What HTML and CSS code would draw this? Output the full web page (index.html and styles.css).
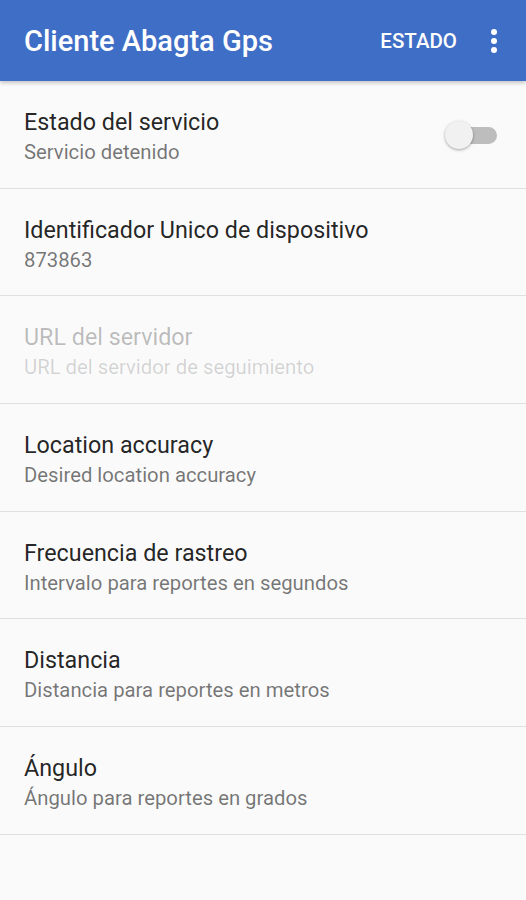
FILE: index.html
```html
<!DOCTYPE html>
<html lang="es">

<head>
    <meta charset="UTF-8">
    <meta name="viewport" content="width=device-width, initial-scale=1.0">
    <title>Cliente Abagta Gps</title>
    <link rel="stylesheet" href="styles.css">
</head>

<body>
    <!-- Toolbar -->
    <header class="toolbar">
        <h1 class="toolbar-title">Cliente Abagta Gps</h1>
        <span class="toolbar-action">ESTADO</span>
        <span class="overflow">
            <span class="dot"></span>
            <span class="dot"></span>
            <span class="dot"></span>
        </span>
    </header>

    <!-- Preferences -->
    <ul class="prefs">
        <li class="pref">
            <div class="pref-text">
                <div class="pref-title">Estado del servicio</div>
                <div class="pref-summary">Servicio detenido</div>
            </div>
            <span class="switch"><span class="thumb"></span></span>
        </li>
        <li class="pref">
            <div class="pref-text">
                <div class="pref-title">Identificador Unico de dispositivo</div>
                <div class="pref-summary">873863</div>
            </div>
        </li>
        <li class="pref disabled">
            <div class="pref-text">
                <div class="pref-title">URL del servidor</div>
                <div class="pref-summary">URL del servidor de seguimiento</div>
            </div>
        </li>
        <li class="pref">
            <div class="pref-text">
                <div class="pref-title">Location accuracy</div>
                <div class="pref-summary">Desired location accuracy</div>
            </div>
        </li>
        <li class="pref">
            <div class="pref-text">
                <div class="pref-title">Frecuencia de rastreo</div>
                <div class="pref-summary">Intervalo para reportes en segundos</div>
            </div>
        </li>
        <li class="pref">
            <div class="pref-text">
                <div class="pref-title">Distancia</div>
                <div class="pref-summary">Distancia para reportes en metros</div>
            </div>
        </li>
        <li class="pref">
            <div class="pref-text">
                <div class="pref-title">Ángulo</div>
                <div class="pref-summary">Ángulo para reportes en grados</div>
            </div>
        </li>
    </ul>
</body>

</html>
```

FILE: styles.css
```css
body {
    font-family: Roboto, "Liberation Sans", sans-serif;
    background-color: #fafafa;
    margin: 0;
}

.toolbar {
    position: relative;
    z-index: 1;
    display: flex;
    align-items: center;
    height: 81px;
    padding: 0 29px 0 24px;
    background-color: #3f6ec6;
    color: #fff;
    box-shadow: 0 2px 4px rgba(0, 0, 0, 0.22);
}

.toolbar-title {
    flex: 1;
    margin: 0;
    font-size: 29px;
    font-weight: 500;
}

.toolbar-action {
    font-size: 20.5px;
    font-weight: 500;
    margin-right: 34px;
}

.overflow {
    display: flex;
    flex-direction: column;
    gap: 3px;
}

.dot {
    width: 6px;
    height: 6px;
    border-radius: 50%;
    background-color: #fff;
}

.prefs {
    list-style: none;
    margin: 0;
    padding: 0;
}

.pref {
    display: flex;
    align-items: flex-start;
    box-sizing: border-box;
    height: 107.7px;
    padding: 26px 24px 0;
    border-bottom: 1px solid #e0e0e0;
}

.pref-text {
    flex: 1;
}

.pref-title {
    font-size: 23.3px;
    line-height: 30px;
    color: rgba(0, 0, 0, 0.87);
}

.pref-summary {
    font-size: 20.3px;
    line-height: 30px;
    color: rgba(0, 0, 0, 0.54);
}

.disabled .pref-title {
    color: rgba(0, 0, 0, 0.26);
}

.disabled .pref-summary {
    color: rgba(0, 0, 0, 0.16);
}

.switch {
    position: relative;
    width: 50px;
    height: 17px;
    margin-top: 20px;
    margin-right: 5px;
    border-radius: 9px;
    background-color: #bdbdbd;
}

.switch .thumb {
    position: absolute;
    left: -2px;
    top: -6px;
    width: 28px;
    height: 28px;
    border-radius: 50%;
    background-color: #f1f1f1;
    box-shadow: 0 1px 3px rgba(0, 0, 0, 0.35);
}
```
